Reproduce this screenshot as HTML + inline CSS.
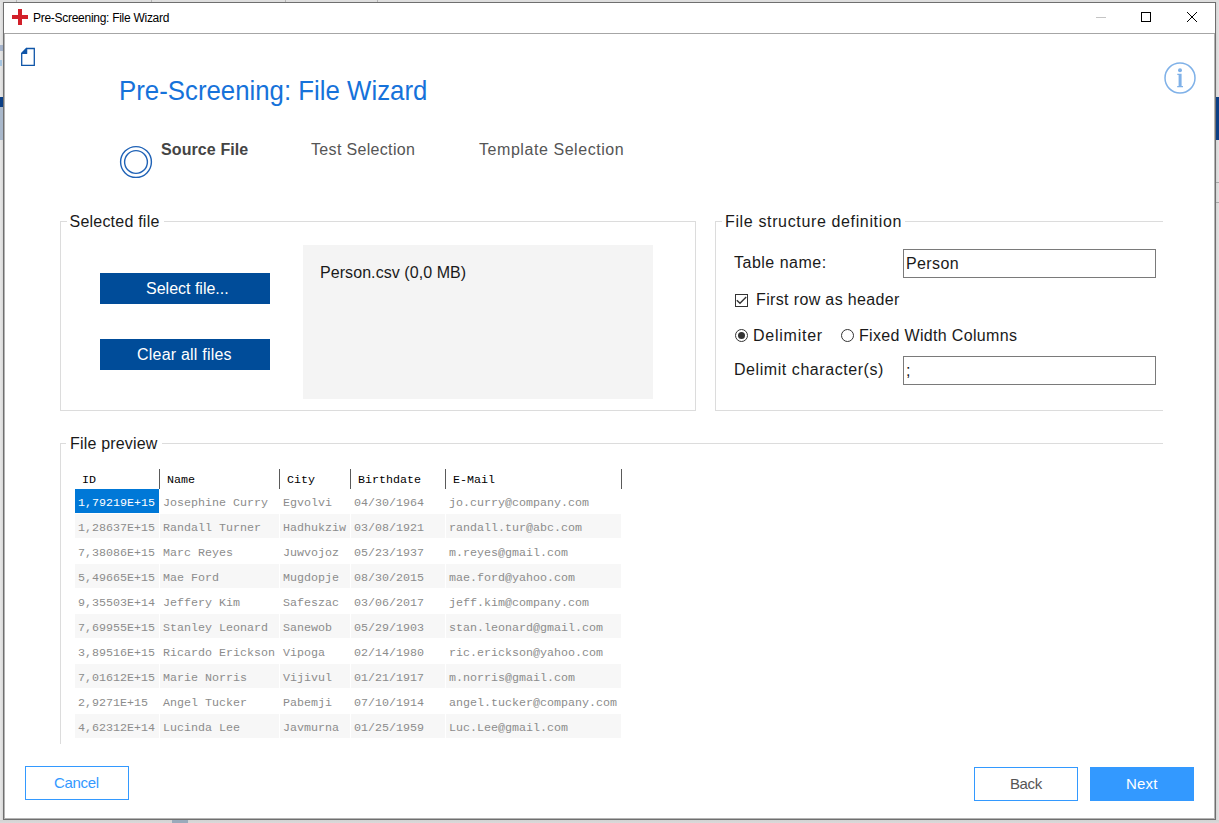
<!DOCTYPE html>
<html>
<head>
<meta charset="utf-8">
<style>
html,body{margin:0;padding:0;}
body{width:1219px;height:823px;position:relative;overflow:hidden;background:#e0e0e0;font-family:"Liberation Sans",sans-serif;}
.a{position:absolute;}
.t{position:absolute;white-space:nowrap;line-height:1;font-size:16px;color:#1a1a1a;}
.m{position:absolute;white-space:nowrap;line-height:1;font-family:"Liberation Mono",monospace;font-size:11.667px;color:#8c8c8c;}
.mh{position:absolute;white-space:nowrap;line-height:1;font-family:"Liberation Mono",monospace;font-size:11.667px;font-weight:normal;color:#000;}
.gb{position:absolute;border:1px solid #dcdcdc;box-sizing:border-box;}
.sep{position:absolute;top:469px;width:1px;height:20px;background:#5a5a5a;}
.row{position:absolute;left:75px;width:546px;height:24px;}
.c{position:absolute;top:0;height:24px;background:#f5f5f5;}
</style>
</head>
<body>
<!-- background behind window -->
<div class="a" style="left:0;top:0;width:3px;height:823px;background:linear-gradient(to right,#e8e8e8,#d8d8d8);"></div>
<div class="a" style="left:1216px;top:0;width:3px;height:823px;background:linear-gradient(to right,#d4d4d4,#e4e4e4);"></div>
<div class="a" style="left:0;top:820px;width:1219px;height:3px;background:linear-gradient(to bottom,#d2d2d2,#dadada);"></div>
<div class="a" style="left:0;top:0;width:1219px;height:2px;background:#dedede;"></div>
<div class="a" style="left:16px;top:0;width:1px;height:2px;background:#b4b4b4;"></div>
<div class="a" style="left:151px;top:0;width:1px;height:2px;background:#b4b4b4;"></div>
<div class="a" style="left:285px;top:0;width:1px;height:2px;background:#b4b4b4;"></div>
<div class="a" style="left:377px;top:0;width:1px;height:2px;background:#b4b4b4;"></div>
<div class="a" style="left:0;top:97px;width:3px;height:10px;background:#0b3f86;"></div>
<div class="a" style="left:0;top:107px;width:3px;height:33px;background:#a9b8cb;"></div>
<div class="a" style="left:1216px;top:97px;width:3px;height:43px;background:#0b3f86;"></div>
<div class="a" style="left:172px;top:820px;width:16px;height:3px;background:#9aaabb;"></div>
<div class="a" style="left:1216px;top:182px;width:3px;height:1px;background:#a8a8a8;"></div>
<div class="a" style="left:1216px;top:202px;width:3px;height:1px;background:#a8a8a8;"></div>
<div class="a" style="left:0;top:45px;width:3px;height:6px;background:#8a9ec0;opacity:0.7;"></div>
<div class="a" style="left:0;top:60px;width:2px;height:6px;background:#8cb8e0;opacity:0.7;"></div>

<!-- window -->
<div class="a" style="left:3px;top:2px;width:1213px;height:818px;box-sizing:border-box;border:1px solid #6f6f6f;background:#fff;"></div>
<div class="a" style="left:4px;top:33px;width:1211px;height:1px;background:#a6a6a6;"></div>
<div class="a" style="left:4px;top:34px;width:1px;height:784px;background:#b4b4b4;"></div>
<div class="a" style="left:1214px;top:34px;width:1px;height:784px;background:#b4b4b4;"></div>
<div class="a" style="left:4px;top:818px;width:1211px;height:1px;background:#b4b4b4;"></div>

<!-- titlebar -->
<div class="a" style="left:12px;top:15px;width:16px;height:4px;background:#d2202a;"></div>
<div class="a" style="left:18px;top:9px;width:4px;height:16px;background:#d2202a;"></div>
<div class="t" style="left:33px;top:12px;font-size:12px;letter-spacing:-0.28px;color:#000;">Pre-Screening: File Wizard</div>
<div class="a" style="left:1096px;top:17px;width:10px;height:1px;background:#c4c4c4;"></div>
<div class="a" style="left:1141px;top:12px;width:10px;height:10px;box-sizing:border-box;border:1px solid #000;"></div>
<svg class="a" style="left:1186px;top:11px;" width="12" height="12" viewBox="0 0 12 12"><path d="M1 1L11 11M11 1L1 11" stroke="#000" stroke-width="1" fill="none"/></svg>

<!-- doc icon -->
<svg class="a" style="left:20px;top:47px;" width="17" height="21" viewBox="0 0 17 21"><path d="M1.7 6.4 L6.6 1.5 H14.3 V18.3 H1.7 Z" stroke="#0f55a8" stroke-width="1.3" fill="none"/><path d="M1.7 6.4 L6.6 1.5 V6.4 Z" fill="#0f55a8" stroke="#0f55a8" stroke-width="1.3" stroke-linejoin="round"/></svg>

<!-- info icon -->
<svg class="a" style="left:1160px;top:58px;" width="40" height="40" viewBox="0 0 40 40"><circle cx="20" cy="20" r="15" stroke="#7fb1e8" stroke-width="1.5" fill="none"/><circle cx="20" cy="12.2" r="2" fill="#7fb1e8"/><path d="M17.3 15.8 H21.6 V28 H23 V29.2 H17.2 V28 H18.6 V17 H17.3 Z" fill="#7fb1e8"/></svg>

<!-- big title -->
<div class="t" style="left:119px;top:77px;font-size:27.3px;transform:scaleX(0.9455);transform-origin:0 0;color:#1672da;">Pre-Screening: File Wizard</div>

<!-- steps -->
<svg class="a" style="left:118px;top:144px;" width="36" height="36" viewBox="0 0 36 36"><circle cx="18" cy="18" r="15.4" stroke="#1f62b6" stroke-width="1.4" fill="none"/><circle cx="18" cy="18" r="11.4" stroke="#1f62b6" stroke-width="1.4" fill="none"/></svg>
<div class="t" style="left:161px;top:142px;font-weight:bold;letter-spacing:0.1px;color:#444;">Source File</div>
<div class="t" style="left:311px;top:142px;letter-spacing:0.33px;color:#555;">Test Selection</div>
<div class="t" style="left:479px;top:142px;letter-spacing:0.56px;color:#555;">Template Selection</div>

<!-- Selected file group -->
<div class="gb" style="left:60px;top:221px;width:636px;height:190px;"></div>
<div class="a" style="left:67px;top:214px;width:97px;height:14px;background:#fff;"></div>
<div class="t" style="left:69.5px;top:214px;letter-spacing:0.22px;">Selected file</div>
<div class="a" style="left:100px;top:273px;width:170px;height:31px;background:#004c99;"></div>
<div class="t" style="left:146px;top:281px;color:#fff;">Select file...</div>
<div class="a" style="left:100px;top:339px;width:170px;height:31px;background:#004c99;"></div>
<div class="t" style="left:137px;top:347px;letter-spacing:0.21px;color:#fff;">Clear all files</div>
<div class="a" style="left:303px;top:245px;width:350px;height:154px;background:#f4f4f4;"></div>
<div class="t" style="left:320px;top:265px;letter-spacing:0.07px;">Person.csv (0,0 MB)</div>

<!-- File structure group -->
<div class="a" style="left:715px;top:221px;width:448px;height:190px;box-sizing:border-box;border:1px solid #dcdcdc;border-right:none;"></div>
<div class="a" style="left:722px;top:214px;width:183px;height:14px;background:#fff;"></div>
<div class="t" style="left:725px;top:214px;letter-spacing:0.64px;">File structure definition</div>
<div class="t" style="left:734px;top:255px;letter-spacing:0.5px;">Table name:</div>
<div class="a" style="left:903px;top:249px;width:253px;height:29px;box-sizing:border-box;border:1px solid #7a7a7a;"></div>
<div class="t" style="left:906px;top:256px;letter-spacing:0.4px;">Person</div>
<div class="a" style="left:735px;top:294px;width:13px;height:13px;box-sizing:border-box;border:1px solid #333;"></div>
<svg class="a" style="left:735px;top:294px;" width="13" height="13" viewBox="0 0 13 13"><path d="M1.8 6.2 L5 9.3 L11.2 3.1" stroke="#333" stroke-width="1.4" fill="none"/></svg>
<div class="t" style="left:756px;top:292px;letter-spacing:0.36px;">First row as header</div>
<svg class="a" style="left:734px;top:328px;" width="15" height="15" viewBox="0 0 15 15"><circle cx="7.5" cy="7.5" r="6" stroke="#333" stroke-width="1" fill="none"/><circle cx="7.5" cy="7.5" r="3.5" fill="#333"/></svg>
<div class="t" style="left:753px;top:328px;letter-spacing:0.75px;">Delimiter</div>
<svg class="a" style="left:840px;top:328px;" width="15" height="15" viewBox="0 0 15 15"><circle cx="7.5" cy="7.5" r="6" stroke="#333" stroke-width="1" fill="none"/></svg>
<div class="t" style="left:859px;top:328px;letter-spacing:0.33px;">Fixed Width Columns</div>
<div class="t" style="left:734px;top:362px;letter-spacing:0.56px;">Delimit character(s)</div>
<div class="a" style="left:903px;top:356px;width:253px;height:29px;box-sizing:border-box;border:1px solid #7a7a7a;"></div>
<div class="t" style="left:906px;top:363px;">;</div>

<!-- File preview group -->
<div class="a" style="left:60px;top:443px;width:1px;height:301px;background:#dcdcdc;"></div>
<div class="a" style="left:60px;top:443px;width:1103px;height:1px;background:#dcdcdc;"></div>
<div class="a" style="left:66px;top:436px;width:96px;height:14px;background:#fff;"></div>
<div class="t" style="left:70px;top:436px;letter-spacing:0.18px;">File preview</div>

<!-- grid header -->
<div class="sep" style="left:159px;"></div>
<div class="sep" style="left:279px;"></div>
<div class="sep" style="left:350px;"></div>
<div class="sep" style="left:445px;"></div>
<div class="sep" style="left:621px;"></div>
<div class="mh" style="left:82px;top:475px;">ID</div>
<div class="mh" style="left:167px;top:475px;">Name</div>
<div class="mh" style="left:287px;top:475px;">City</div>
<div class="mh" style="left:358px;top:475px;">Birthdate</div>
<div class="mh" style="left:453px;top:475px;">E-Mail</div>

<!-- GRID_ROWS -->
<div class="a" style="left:75px;top:489px;width:84px;height:24px;background:#0078d7;"></div>
<div class="m" style="left:78px;top:498px; color:#fff;">1,79219E+15</div>
<div class="m" style="left:163px;top:498px;">Josephine Curry</div>
<div class="m" style="left:283px;top:498px;">Egvolvi</div>
<div class="m" style="left:354px;top:498px;">04/30/1964</div>
<div class="m" style="left:449px;top:498px;">jo.curry@company.com</div>
<div class="a" style="left:75px;top:514px;width:84px;height:24px;background:#f7f7f7;"></div>
<div class="a" style="left:160px;top:514px;width:119px;height:24px;background:#f7f7f7;"></div>
<div class="a" style="left:280px;top:514px;width:70px;height:24px;background:#f7f7f7;"></div>
<div class="a" style="left:351px;top:514px;width:94px;height:24px;background:#f7f7f7;"></div>
<div class="a" style="left:446px;top:514px;width:175px;height:24px;background:#f7f7f7;"></div>
<div class="m" style="left:78px;top:523px;">1,28637E+15</div>
<div class="m" style="left:163px;top:523px;">Randall Turner</div>
<div class="m" style="left:283px;top:523px;">Hadhukziw</div>
<div class="m" style="left:354px;top:523px;">03/08/1921</div>
<div class="m" style="left:449px;top:523px;">randall.tur@abc.com</div>
<div class="m" style="left:78px;top:548px;">7,38086E+15</div>
<div class="m" style="left:163px;top:548px;">Marc Reyes</div>
<div class="m" style="left:283px;top:548px;">Juwvojoz</div>
<div class="m" style="left:354px;top:548px;">05/23/1937</div>
<div class="m" style="left:449px;top:548px;">m.reyes@gmail.com</div>
<div class="a" style="left:75px;top:564px;width:84px;height:24px;background:#f7f7f7;"></div>
<div class="a" style="left:160px;top:564px;width:119px;height:24px;background:#f7f7f7;"></div>
<div class="a" style="left:280px;top:564px;width:70px;height:24px;background:#f7f7f7;"></div>
<div class="a" style="left:351px;top:564px;width:94px;height:24px;background:#f7f7f7;"></div>
<div class="a" style="left:446px;top:564px;width:175px;height:24px;background:#f7f7f7;"></div>
<div class="m" style="left:78px;top:573px;">5,49665E+15</div>
<div class="m" style="left:163px;top:573px;">Mae Ford</div>
<div class="m" style="left:283px;top:573px;">Mugdopje</div>
<div class="m" style="left:354px;top:573px;">08/30/2015</div>
<div class="m" style="left:449px;top:573px;">mae.ford@yahoo.com</div>
<div class="m" style="left:78px;top:598px;">9,35503E+14</div>
<div class="m" style="left:163px;top:598px;">Jeffery Kim</div>
<div class="m" style="left:283px;top:598px;">Safeszac</div>
<div class="m" style="left:354px;top:598px;">03/06/2017</div>
<div class="m" style="left:449px;top:598px;">jeff.kim@company.com</div>
<div class="a" style="left:75px;top:614px;width:84px;height:24px;background:#f7f7f7;"></div>
<div class="a" style="left:160px;top:614px;width:119px;height:24px;background:#f7f7f7;"></div>
<div class="a" style="left:280px;top:614px;width:70px;height:24px;background:#f7f7f7;"></div>
<div class="a" style="left:351px;top:614px;width:94px;height:24px;background:#f7f7f7;"></div>
<div class="a" style="left:446px;top:614px;width:175px;height:24px;background:#f7f7f7;"></div>
<div class="m" style="left:78px;top:623px;">7,69955E+15</div>
<div class="m" style="left:163px;top:623px;">Stanley Leonard</div>
<div class="m" style="left:283px;top:623px;">Sanewob</div>
<div class="m" style="left:354px;top:623px;">05/29/1903</div>
<div class="m" style="left:449px;top:623px;">stan.leonard@gmail.com</div>
<div class="m" style="left:78px;top:648px;">3,89516E+15</div>
<div class="m" style="left:163px;top:648px;">Ricardo Erickson</div>
<div class="m" style="left:283px;top:648px;">Vipoga</div>
<div class="m" style="left:354px;top:648px;">02/14/1980</div>
<div class="m" style="left:449px;top:648px;">ric.erickson@yahoo.com</div>
<div class="a" style="left:75px;top:664px;width:84px;height:24px;background:#f7f7f7;"></div>
<div class="a" style="left:160px;top:664px;width:119px;height:24px;background:#f7f7f7;"></div>
<div class="a" style="left:280px;top:664px;width:70px;height:24px;background:#f7f7f7;"></div>
<div class="a" style="left:351px;top:664px;width:94px;height:24px;background:#f7f7f7;"></div>
<div class="a" style="left:446px;top:664px;width:175px;height:24px;background:#f7f7f7;"></div>
<div class="m" style="left:78px;top:673px;">7,01612E+15</div>
<div class="m" style="left:163px;top:673px;">Marie Norris</div>
<div class="m" style="left:283px;top:673px;">Vijivul</div>
<div class="m" style="left:354px;top:673px;">01/21/1917</div>
<div class="m" style="left:449px;top:673px;">m.norris@gmail.com</div>
<div class="m" style="left:78px;top:698px;">2,9271E+15</div>
<div class="m" style="left:163px;top:698px;">Angel Tucker</div>
<div class="m" style="left:283px;top:698px;">Pabemji</div>
<div class="m" style="left:354px;top:698px;">07/10/1914</div>
<div class="m" style="left:449px;top:698px;">angel.tucker@company.com</div>
<div class="a" style="left:75px;top:714px;width:84px;height:24px;background:#f7f7f7;"></div>
<div class="a" style="left:160px;top:714px;width:119px;height:24px;background:#f7f7f7;"></div>
<div class="a" style="left:280px;top:714px;width:70px;height:24px;background:#f7f7f7;"></div>
<div class="a" style="left:351px;top:714px;width:94px;height:24px;background:#f7f7f7;"></div>
<div class="a" style="left:446px;top:714px;width:175px;height:24px;background:#f7f7f7;"></div>
<div class="m" style="left:78px;top:723px;">4,62312E+14</div>
<div class="m" style="left:163px;top:723px;">Lucinda Lee</div>
<div class="m" style="left:283px;top:723px;">Javmurna</div>
<div class="m" style="left:354px;top:723px;">01/25/1959</div>
<div class="m" style="left:449px;top:723px;">Luc.Lee@gmail.com</div>

<!-- bottom buttons -->
<div class="a" style="left:25px;top:766px;width:104px;height:34px;box-sizing:border-box;border:1px solid #3399ff;"></div>
<div class="t" style="left:54px;top:775px;font-size:15px;letter-spacing:-0.3px;color:#3399ff;">Cancel</div>
<div class="a" style="left:974px;top:767px;width:104px;height:34px;box-sizing:border-box;border:1px solid #3399ff;"></div>
<div class="t" style="left:1010px;top:776px;font-size:15px;letter-spacing:-0.4px;color:#555;">Back</div>
<div class="a" style="left:1090px;top:767px;width:104px;height:34px;background:#3399ff;"></div>
<div class="t" style="left:1126px;top:776px;font-size:15px;letter-spacing:0.2px;color:#fff;">Next</div>
</body>
</html>
